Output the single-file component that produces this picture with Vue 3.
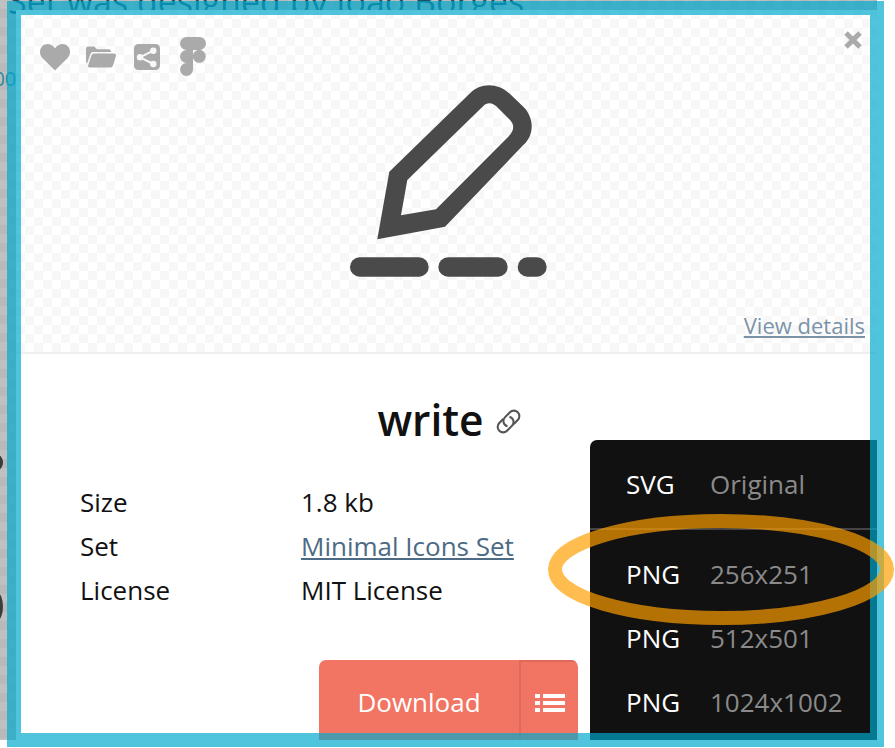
<template>
  <div class="canvas">
    <div class="screen">
      <div class="page-behind">
        <div class="page-heading">Set was designed by Joao Borges</div>
        <div class="page-count">200</div>
        <div class="page-dot dot-one"></div>
        <div class="page-dot dot-two"></div>
      </div>

      <div class="modal">
        <div class="preview">
          <div class="actions">
            <svg class="action" width="30" height="28" viewBox="0 0 30 28">
              <path d="M15 27.5 2.6 15.2C-.9 11.6-.8 6.100 2.500 3 5.900-.2 11.300.4 15 5.200 18.700.4 24.100-.2 27.500 3c3.300 3.100 3.400 8.600-.1 12.200z" />
            </svg>
            <svg class="action folder" width="30" height="22" viewBox="0 0 30 22">
              <path d="M0 3a2.500 2.500 0 0 1 2.500-2.500h5.800l2.700 2.700h11.500A2.500 2.500 0 0 1 25 5.500v.5H7.500A3.500 3.500 0 0 0 4.200 8.400L1.100 17.500A3 3 0 0 1 0 15z" />
              <path d="M7.800 7.500H28a2 2 0 0 1 1.900 2.600l-3 9.600a2.500 2.500 0 0 1-2.400 1.800H3.500a1.500 1.500 0 0 1-1.400-2l3.400-10.300a2.500 2.500 0 0 1 2.300-1.700z" />
            </svg>
            <svg class="action share" width="26" height="26" viewBox="0 0 26 26">
              <rect width="26" height="26" rx="4.500" />
              <path class="share-line" d="M19.300 6.700 6 13.300l13.300 6.700" />
              <circle class="share-node" cx="19.300" cy="6.700" r="3.200" />
              <circle class="share-node" cx="6" cy="13.300" r="3.200" />
              <circle class="share-node" cx="19.300" cy="20" r="3.200" />
            </svg>
            <svg class="action figma" width="26" height="39" viewBox="0 0 26 39">
              <path d="M6.500 0h13a6.500 6.500 0 0 1 0 13h-13a6.500 6.500 0 0 1 0-13z" />
              <path d="M6.500 13H13v13H6.500a6.500 6.500 0 0 1 0-13z" />
              <circle cx="19.300" cy="19.300" r="6.500" />
              <path d="M6.500 26H13v6.500A6.500 6.500 0 1 1 6.500 26z" />
            </svg>
          </div>

          <button class="close" type="button" aria-label="Close">
            <svg width="20" height="20" viewBox="0 0 20 20">
              <path d="M3 3l14 14M17 3 3 17" />
            </svg>
          </button>

          <svg class="pen" width="240" height="220" viewBox="327 70 240 220">
            <path
              fill-rule="evenodd"
              d="M377.300 239.300 389.300 171.700 470 93.300C480 83 497 82 510 94L523.300 106.700C534 117 535 135 523.300 145L445 226.700zM407.300 180 401 215.300 436 209.300 508.300 136.700C514 131 515 125 510 120L498.300 108.300C493 102 487 102 483.300 106z"
            />
            <rect x="350" y="257.300" width="78.700" height="19.400" rx="9.700" />
            <rect x="438.300" y="257.300" width="69.400" height="19.400" rx="9.700" />
            <rect x="517.700" y="257.300" width="29" height="19.400" rx="9.700" />
          </svg>

          <a class="view-details">View details</a>
        </div>

        <div class="title-row">
          <h1>write</h1>
          <svg class="link-icon" width="33" height="33" viewBox="0 0 24 24">
            <g transform="rotate(-45 12 12)">
              <path d="M10.500 8H6.500a4 4 0 0 0 0 8h5a4 4 0 0 0 3.500-6" />
              <path d="M13.500 16h4a4 4 0 0 0 0-8h-5a4 4 0 0 0-3.500 6" />
            </g>
          </svg>
        </div>

        <div class="info">
          <template v-for="row in info" :key="row.label">
            <div>{{ row.label }}</div>
            <div>
              <a v-if="row.link" class="set-link">{{ row.value }}</a>
              <template v-else>{{ row.value }}</template>
            </div>
          </template>
        </div>

        <div class="download">
          <div class="download-main">Download</div>
          <div class="download-more">
            <svg width="30" height="20" viewBox="0 0 30 20">
              <rect x="0" y="1" width="5" height="4" />
              <rect x="8" y="1" width="22" height="4" />
              <rect x="0" y="8" width="5" height="4" />
              <rect x="8" y="8" width="22" height="4" />
              <rect x="0" y="15" width="5" height="4" />
              <rect x="8" y="15" width="22" height="4" />
            </svg>
          </div>
        </div>

        <div class="formats">
          <div class="format format-first">
            <span class="format-type">SVG</span>
            <span class="format-size">Original</span>
          </div>
          <div class="format-list">
            <div v-for="item in pngSizes" :key="item" class="format">
              <span class="format-type">PNG</span>
              <span class="format-size">{{ item }}</span>
            </div>
          </div>
        </div>
      </div>
    </div>

    <div class="frame"></div>
    <svg class="ring" width="895" height="748" viewBox="0 0 895 748">
      <ellipse cx="721" cy="569.500" rx="166" ry="48.500" />
    </svg>
  </div>
</template>

<script setup>
const info = [
  { label: "Size", value: "1.8 kb" },
  { label: "Set", value: "Minimal Icons Set", link: true },
  { label: "License", value: "MIT License" },
];

const pngSizes = ["256x251", "512x501", "1024x1002"];
</script>

<style>
body {
  margin: 0;
  background: #fff;
}
</style>

<style scoped>
.canvas {
  position: relative;
  width: 895px;
  height: 748px;
  overflow: hidden;
  background: #fff;
  font-family: "Open Sans", sans-serif;
}

.screen {
  position: relative;
  width: 877px;
  height: 740px;
  padding: 10px 0 0 16px;
  box-sizing: border-box;
  overflow: hidden;
  background-color: #c0c0c0;
  background-image: conic-gradient(#b9b9b9 25%, transparent 0 50%, #b9b9b9 0 75%, transparent 0);
  background-size: 18px 18px;
}

.page-behind {
  position: absolute;
  inset: 0;
}

.page-heading {
  position: absolute;
  left: 8px;
  top: -19px;
  font-size: 34px;
  line-height: 40px;
  white-space: nowrap;
  color: #1d4f63;
}

.page-count {
  position: absolute;
  left: -18px;
  top: 68px;
  font-size: 20px;
  line-height: 22px;
  color: #2a8a9c;
}

.page-dot {
  position: absolute;
  left: -8px;
  width: 11px;
  border-radius: 50%;
  background: #3c3c3c;
}

.dot-one {
  top: 455px;
  height: 15px;
}

.dot-two {
  top: 593px;
  height: 27px;
}

.modal {
  position: relative;
  height: 730px;
  overflow: hidden;
  background: #fff;
}

.preview {
  position: relative;
  display: flex;
  justify-content: center;
  height: 344px;
  padding-top: 60px;
  box-sizing: border-box;
  border-bottom: 2px solid #efefef;
  background-color: #fff;
  background-image: conic-gradient(#f7f7f7 25%, transparent 0 50%, #f7f7f7 0 75%, transparent 0);
  background-size: 18px 18px;
}

.actions {
  position: absolute;
  left: 24px;
  top: 27px;
  display: flex;
  align-items: flex-start;
  gap: 16px;
}

.action {
  display: block;
  fill: #aaa;
  margin-top: 6px;
}

.folder {
  margin-top: 9px;
}

.share {
  margin-top: 7px;
  margin-left: 2px;
}

.share-line {
  fill: none;
  stroke: #f8f8f8;
  stroke-width: 2;
}

.share-node {
  fill: #f8f8f8;
}

.figma {
  margin-top: 0;
  margin-left: 4px;
}

.close {
  position: absolute;
  right: 14px;
  top: 20px;
  padding: 0;
  border: none;
  background: none;
  line-height: 0;
}

.close path {
  fill: none;
  stroke: #aaa;
  stroke-width: 5;
}

.pen {
  display: block;
  fill: #4a4a4a;
}

.view-details {
  position: absolute;
  right: 12px;
  top: 300px;
  font-size: 22px;
  line-height: 30px;
  color: #7b93a8;
  text-decoration: underline;
}

.title-row {
  display: flex;
  justify-content: center;
  align-items: center;
  gap: 8px;
  height: 44px;
  margin-top: 44px;
  padding-left: 9px;
}

.title-row h1 {
  margin: 0;
  font-size: 42.500px;
  line-height: 44px;
  font-weight: 600;
  color: #111;
}

.link-icon {
  fill: none;
  stroke: #555;
  stroke-width: 1.500;
  margin-top: 2px;
}

.info {
  display: grid;
  grid-template-columns: 221px 1fr;
  grid-auto-rows: 44px;
  align-items: center;
  margin: 38px 0 0 64px;
  font-size: 26px;
  color: #111;
}

.set-link {
  color: #4d6b85;
  text-decoration: underline;
}

.download {
  display: flex;
  width: 259px;
  height: 84px;
  margin: 48px 0 0 303px;
  border-radius: 7px 7px 0 0;
  overflow: hidden;
  background: #f27563;
  color: #fff;
  font-size: 26px;
}

.download-main {
  display: flex;
  align-items: center;
  justify-content: center;
  width: 200px;
}

.download-more {
  display: flex;
  align-items: center;
  justify-content: center;
  flex: 1;
  box-sizing: border-box;
  border-left: 2px solid #df6a5a;
  border-top: 2px solid #df6a5a;
}

.download-more svg {
  display: block;
  fill: #fff;
}

.formats {
  position: absolute;
  left: 574px;
  top: 430px;
  right: 0;
  bottom: 0;
  border-radius: 7px 0 0 0;
  background: #111;
  font-size: 26px;
}

.format {
  display: flex;
  align-items: center;
  height: 64px;
  padding-left: 36px;
}

.format-first {
  height: 90px;
  border-bottom: 2px solid #444;
  box-sizing: border-box;
}

.format-list {
  padding-top: 12px;
}

.format-type {
  width: 84px;
  color: #fff;
}

.format-size {
  color: #8a8a8a;
}

.frame {
  position: absolute;
  left: 7px;
  top: 1px;
  width: 877px;
  height: 746px;
  box-sizing: border-box;
  border: 14px solid rgba(0, 169, 206, 0.685);
}

.ring {
  position: absolute;
  left: 0;
  top: 0;
  fill: none;
}

.ring ellipse {
  stroke: rgba(255, 159, 0, 0.685);
  stroke-width: 14;
}
</style>
